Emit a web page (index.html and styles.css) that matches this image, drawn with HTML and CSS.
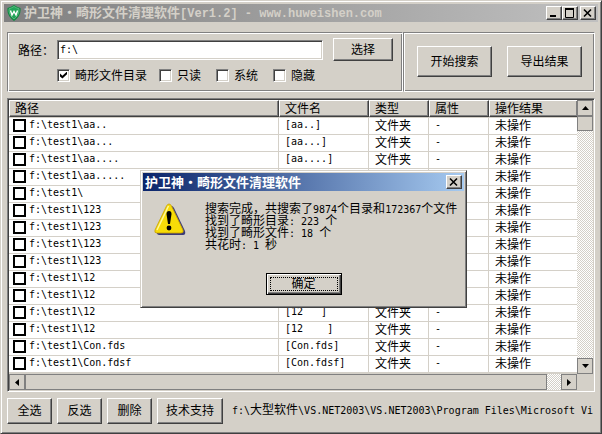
FILE: index.html
```html
<!DOCTYPE html>
<html lang="zh-CN">
<head>
    <meta charset="UTF-8">
    <meta name="viewport" content="width=device-width, initial-scale=1.0">
    <title>护卫神·畸形文件清理软件</title>
    <link rel="stylesheet" href="styles.css">
</head>
<body>
    <main class="window">
        <header class="titlebar inactive">
            <svg class="logo" width="14" height="16" viewBox="0 0 14 16">
                <path d="M7 0 Q10 2 13.500 3 Q14.500 11 7 16 Q-.5 11 .5 3 Q4 2 7 0Z" fill="#128a43"/>
                <path d="M7 1.500 Q9.500 3 12 3.800 Q12.500 10 7 14 Q1.500 10 2 3.800 Q4.500 3 7 1.500Z" fill="#22a458" stroke="#7fd09c" stroke-width=".6"/>
                <path d="M3.500 5.500 L5 10 L7 6.500 L9 10 L10.500 5.500" fill="none" stroke="#fff" stroke-width="1.400"/>
            </svg>
            <h1 class="title">护卫神<span class="dot">·</span>畸形文件清理软件<span class="title-latin">[Ver1.2] - www.huweishen.com</span></h1>
            <div class="controls">
                <button class="control" aria-label="最小化"><svg width="12" height="10"><path d="M2 8h6" stroke="#000" stroke-width="2"/></svg></button>
                <button class="control" aria-label="最大化"><svg width="12" height="10"><path d="M1.500 0v9.500h8V0M1 1h9" fill="none" stroke="#000"/><path d="M1 1h9" stroke="#000" stroke-width="2"/></svg></button>
                <button class="control close" aria-label="关闭"><svg width="12" height="10"><path d="M2 1.500l7 7M9 1.500l-7 7" stroke="#000" stroke-width="1.600"/></svg></button>
            </div>
        </header>

        <div class="content">
            <section class="options">
                <form class="search-box">
                    <label for="path">路径：</label>
                    <input class="path-input" id="path" type="text" value="f:\">
                    <button class="btn browse" type="button">选择</button>
                    <div class="checks">
                        <label class="check"><input type="checkbox" checked>畸形文件目录</label>
                        <label class="check"><input type="checkbox">只读</label>
                        <label class="check"><input type="checkbox">系统</label>
                        <label class="check"><input type="checkbox">隐藏</label>
                    </div>
                </form>
                <div class="actions">
                    <button class="btn">开始搜索</button>
                    <button class="btn">导出结果</button>
                </div>
            </section>

            <section class="list">
                <table class="results">
                    <colgroup>
                        <col class="col-path"><col class="col-name"><col class="col-type"><col class="col-attr"><col>
                    </colgroup>
                    <thead>
                        <tr><th>路径</th><th>文件名</th><th>类型</th><th>属性</th><th>操作结果</th></tr>
                    </thead>
                    <tbody>
                        <tr><td><label><input type="checkbox">f:\test1\aa..</label></td><td>[aa..]</td><td>文件夹</td><td>-</td><td>未操作</td></tr>
                        <tr><td><label><input type="checkbox">f:\test1\aa...</label></td><td>[aa...]</td><td>文件夹</td><td>-</td><td>未操作</td></tr>
                        <tr><td><label><input type="checkbox">f:\test1\aa....</label></td><td>[aa....]</td><td>文件夹</td><td>-</td><td>未操作</td></tr>
                        <tr><td><label><input type="checkbox">f:\test1\aa.....</label></td><td></td><td></td><td></td><td>未操作</td></tr>
                        <tr><td><label><input type="checkbox">f:\test1\</label></td><td></td><td></td><td></td><td>未操作</td></tr>
                        <tr><td><label><input type="checkbox">f:\test1\123</label></td><td></td><td></td><td></td><td>未操作</td></tr>
                        <tr><td><label><input type="checkbox">f:\test1\123</label></td><td></td><td></td><td></td><td>未操作</td></tr>
                        <tr><td><label><input type="checkbox">f:\test1\123</label></td><td></td><td></td><td></td><td>未操作</td></tr>
                        <tr><td><label><input type="checkbox">f:\test1\123</label></td><td></td><td></td><td></td><td>未操作</td></tr>
                        <tr><td><label><input type="checkbox">f:\test1\12</label></td><td></td><td></td><td></td><td>未操作</td></tr>
                        <tr><td><label><input type="checkbox">f:\test1\12</label></td><td></td><td></td><td></td><td>未操作</td></tr>
                        <tr><td><label><input type="checkbox">f:\test1\12</label></td><td>[12   ]</td><td>文件夹</td><td>-</td><td>未操作</td></tr>
                        <tr><td><label><input type="checkbox">f:\test1\12</label></td><td>[12    ]</td><td>文件夹</td><td>-</td><td>未操作</td></tr>
                        <tr><td><label><input type="checkbox">f:\test1\Con.fds</label></td><td>[Con.fds]</td><td>文件夹</td><td>-</td><td>未操作</td></tr>
                        <tr><td><label><input type="checkbox">f:\test1\Con.fdsf</label></td><td>[Con.fdsf]</td><td>文件夹</td><td>-</td><td>未操作</td></tr>
                    </tbody>
                </table>
                <div class="scroll vertical">
                    <button class="arrow" aria-label="向上"><svg width="7" height="4"><path d="M0 4L3.500 0L7 4Z"/></svg></button>
                    <div class="thumb"></div>
                    <div class="track"></div>
                    <button class="arrow" aria-label="向下"><svg width="7" height="4"><path d="M0 0L3.500 4L7 0Z"/></svg></button>
                </div>
                <div class="scroll horizontal">
                    <button class="arrow" aria-label="向左"><svg width="4" height="7"><path d="M4 0L0 3.500L4 7Z"/></svg></button>
                    <div class="thumb"></div>
                    <div class="track"></div>
                    <button class="arrow" aria-label="向右"><svg width="4" height="7"><path d="M0 0L4 3.500L0 7Z"/></svg></button>
                </div>
            </section>

            <footer class="footer">
                <button class="btn">全选</button>
                <button class="btn">反选</button>
                <button class="btn">删除</button>
                <button class="btn">技术支持</button>
                <p class="status"><span class="mono">f:\</span>大型软件<span class="mono">\VS.NET2003\VS.NET2003\Program Files\Microsoft Vi</span></p>
            </footer>
        </div>
    </main>

    <div class="dialog" role="dialog" aria-labelledby="dialogTitle">
        <header class="titlebar">
            <h2 class="title" id="dialogTitle">护卫神<span class="dot">·</span>畸形文件清理软件</h2>
            <div class="controls">
                <button class="control" aria-label="关闭"><svg width="12" height="10"><path d="M2 1.500l7 7M9 1.500l-7 7" stroke="#000" stroke-width="1.600"/></svg></button>
            </div>
        </header>
        <div class="message">
            <svg class="warning" width="32" height="34" viewBox="0 0 32 34">
                <path d="M17.500 4 Q19 4 20 6 L31 29 Q32 33 29 33 H5 Q2 32 3 30Z" fill="#3b3b78"/>
                <path d="M15 2 Q16.500 2 17.500 4 L29 28 Q30 31 27 31 H3 Q0 31 1 28 L12.500 4 Q13.500 2 15 2Z" fill="#f7dc08" stroke="#c8a000" stroke-width=".8"/>
                <path d="M14.500 4 L3 28" stroke="#fff79a" stroke-width="1.500" fill="none"/>
                <path d="M12.500 12 Q12.500 9 15 9 Q17.500 9 17.500 12 L16 22 H14Z" fill="#000"/>
                <circle cx="15" cy="26" r="2.400" fill="#000"/>
            </svg>
            <div class="message-text">
                <p>搜索完成，共搜索了<span class="mono">9874</span>个目录和<span class="mono">172367</span>个文件</p>
                <p>找到了畸形目录<span class="mono">: 223 </span>个</p>
                <p>找到了畸形文件<span class="mono">: 18 </span>个</p>
                <p>共花时<span class="mono">: 1 </span>秒</p>
            </div>
        </div>
        <button class="btn ok">确定</button>
    </div>
</body>
</html>
```
FILE: styles.css
```css
* {
    box-sizing: border-box;
}
body {
    margin: 0;
    background-color: #d4d0c8;
    color: #000;
    font-family: "Noto Sans CJK SC", sans-serif;
    font-size: 12px;
    line-height: 16px;
    overflow: hidden;
}
h1, h2, p {
    margin: 0;
}
button, input {
    font: inherit;
    color: inherit;
    margin: 0;
}
.mono {
    font-family: "DejaVu Sans Mono", monospace;
    font-size: 10px;
    white-space: pre;
}

/* window frame */
.window, .dialog {
    background-color: #d4d0c8;
    border: 1px solid;
    border-color: #d4d0c8 #404040 #404040 #d4d0c8;
    box-shadow: inset 1px 1px #fff, inset -1px -1px #808080;
}
.window {
    min-height: 100vh;
    padding: 3px;
}
.titlebar {
    display: flex;
    align-items: center;
    height: 18px;
    padding: 0 2px;
    background: linear-gradient(to right, #0a246a, #a6caf0);
    color: #fff;
}
.titlebar.inactive {
    background: linear-gradient(to right, #808080, #c0c0c0);
    color: #d4d0c8;
}
.logo {
    margin: 0 3px 0 1px;
}
.title {
    flex: 1;
    font-size: 13px;
    font-weight: bold;
    line-height: 18px;
    white-space: nowrap;
}
.title-latin {
    font-family: "Liberation Mono", monospace;
    font-size: 12px;
}
.dot {
    display: inline-block;
    width: 13px;
    text-align: center;
}
.controls {
    display: flex;
}
.control {
    display: flex;
    align-items: center;
    justify-content: center;
    width: 16px;
    height: 14px;
    padding: 0;
}
.close {
    margin-left: 2px;
}
.control, .btn {
    background-color: #d4d0c8;
    border: 1px solid;
    border-color: #fff #404040 #404040 #fff;
    box-shadow: inset -1px -1px #808080;
}
.btn {
    padding: 0 0 2px;
    white-space: nowrap;
}

/* search options */
.content {
    padding: 10px 3px 0;
}
.options {
    display: grid;
    grid-template-columns: 1fr 192px;
    height: 60px;
    margin-bottom: 6px;
}
.search-box, .actions {
    border: 1px solid;
    border-color: #808080 #fff #fff #808080;
    box-shadow: inset 1px 1px #fff, inset -1px -1px #808080;
}
.search-box {
    display: grid;
    grid-template-columns: 39px 1fr 60px;
    grid-template-rows: 23px 14px;
    row-gap: 7px;
    align-items: center;
    padding: 5px 9px 0 10px;
}
.path-input {
    height: 20px;
    margin-right: 10px;
    padding: 0 2px;
    min-width: 0;
    border: 1px solid;
    border-color: #808080 #fff #fff #808080;
    box-shadow: inset 1px 1px #404040, inset -1px -1px #d4d0c8;
    background-color: #fff;
    font-family: "DejaVu Sans Mono", monospace;
    font-size: 10px;
}
.browse {
    height: 23px;
}
.checks {
    grid-column: 2 / -1;
    display: flex;
    gap: 15px;
}
.check {
    display: flex;
    align-items: center;
    gap: 5px;
    line-height: 14px;
}
.check:first-child {
    margin-right: -3px;
}
input[type="checkbox"] {
    appearance: none;
    flex: none;
    width: 13px;
    height: 13px;
    background-color: #fff;
}
.check input {
    display: grid;
    place-items: center;
    border: 1px solid;
    border-color: #808080 #fff #fff #808080;
    box-shadow: inset 1px 1px #404040, inset -1px -1px #d4d0c8;
}
input:checked::before {
    content: "";
    width: 7px;
    height: 7px;
    background-color: #000;
    clip-path: polygon(0 30%, 35% 62%, 100% 0, 100% 38%, 35% 100%, 0 70%);
}
.actions {
    display: grid;
    grid-template-columns: 75px 75px;
    gap: 15px;
    padding: 13px;
}
.actions .btn {
    height: 31px;
}

/* result list */
.list {
    display: grid;
    grid-template-columns: 1fr 16px;
    grid-template-rows: 274px 16px;
    border: 1px solid;
    border-color: #808080 #fff #fff #808080;
    box-shadow: inset 1px 1px #404040;
    padding: 1px;
}
.results {
    width: 100%;
    align-self: start;
    table-layout: fixed;
    border-collapse: separate;
    border-spacing: 0;
    background-color: #fff;
}
.col-path {
    width: 270px;
}
.col-name {
    width: 90px;
}
.col-type, .col-attr {
    width: 60px;
}
.results th {
    height: 17px;
    padding: 0 5px 1px;
    background-color: #d4d0c8;
    border: 1px solid;
    border-color: #fff #404040 #404040 #fff;
    box-shadow: inset -1px -1px #808080;
    font-weight: normal;
    line-height: 14px;
    text-align: left;
}
.results td {
    height: 17px;
    padding: 0 5px 2px 6px;
    border-right: 1px solid #d4d0c8;
    border-bottom: 1px solid #d4d0c8;
    line-height: 14px;
    white-space: pre;
}
.results tr:first-child td {
    height: 18px;
    border-top: 1px solid #d4d0c8;
}
.results td:first-child {
    padding-left: 4px;
}
.results td:first-child, .results td:nth-child(2), .results td:nth-child(4) {
    font-family: "DejaVu Sans Mono", monospace;
    font-size: 10px;
}
.results th:last-child, .results td:last-child {
    border-right: 0;
}
.results label {
    display: flex;
    align-items: center;
    gap: 3px;
}
.results input {
    border: 2px solid #000;
}

/* scroll bars */
.scroll {
    display: flex;
}
.vertical {
    flex-direction: column;
}
.track {
    flex: 1;
    background: repeating-conic-gradient(#fff 0 25%, #d4d0c8 0 50%) 0 0 / 2px 2px;
}
.thumb, .arrow {
    background-color: #d4d0c8;
    border: 1px solid #808080;
}
.vertical .thumb {
    height: 15px;
}
.horizontal .thumb {
    flex: 0 1 522px;
}
.arrow {
    display: flex;
    align-items: center;
    justify-content: center;
    flex: none;
    width: 16px;
    height: 16px;
    padding: 0;
}

/* bottom bar */
.footer {
    display: flex;
    gap: 5px;
    align-items: center;
    padding-top: 6px;
}
.footer .btn {
    flex: none;
    min-width: 45px;
    height: 26px;
    padding: 0 8px 2px;
}
.status {
    flex: 1;
    margin-left: 4px;
    padding-bottom: 2px;
    overflow: hidden;
    white-space: nowrap;
}

/* message box */
.dialog {
    position: absolute;
    left: 140px;
    top: 170px;
    width: 327px;
    padding: 2px 2px 12px;
}
.message {
    display: flex;
    gap: 19px;
    padding: 11px 0 0 11px;
}
.message-text {
    line-height: 12px;
    white-space: nowrap;
}
.message-text p {
    height: 12px;
}
.ok {
    display: block;
    width: 76px;
    height: 22px;
    margin: 23px auto 0;
    border-color: #000;
    box-shadow: inset 1px 1px #fff, inset -1px -1px #404040, inset -2px -2px #808080;
    outline: 1px dotted #000;
    outline-offset: -5px;
}
```
